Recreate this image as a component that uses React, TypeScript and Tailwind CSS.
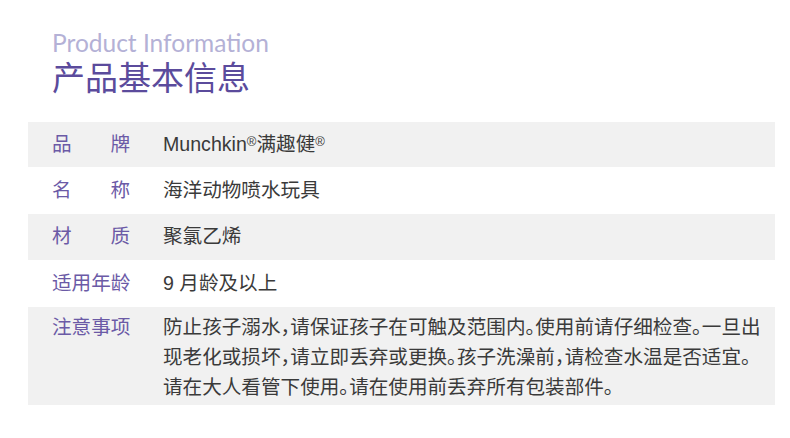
const rows = [
  { label: "品牌", value: "brand", gray: true, h: "h-[45px]" },
  { label: "名称", value: "海洋动物喷水玩具", gray: false, h: "h-[47px]" },
  { label: "材质", value: "聚氯乙烯", gray: true, h: "h-[46px]" },
  { label: "适用年龄", value: "9 月龄及以上", gray: false, h: "h-[47px]" },
];

function Label({ text }: { text: string }) {
  // two-char labels are spread over the width of four chars
  return (
    <div className="w-[78px] flex justify-between text-[#6b5aa6]">
      {text.split("").map((c, i) => (
        <span key={i}>{c}</span>
      ))}
    </div>
  );
}

export default function App() {
  return (
    <div
      className="w-[790px] h-[438px] bg-white pl-[28px] pr-[15px] pt-[28px]"
      style={{ fontFamily: '"Liberation Sans", "Noto Sans CJK SC", sans-serif' }}
    >
      {/* HEADER */}
      <div className="pl-[24px]">
        <div
          className="text-[24.5px] leading-[30px] text-[#b4b1d6]"
          style={{ fontFamily: 'Lato, "Noto Sans", sans-serif' }}
        >
          Product Information
        </div>
        <div
          className="text-[33px] leading-[36px] text-[#5b4b9c]"
          style={{ fontFamily: '"Noto Sans CJK SC", sans-serif' }}
        >
          产品基本信息
        </div>
      </div>

      {/* TABLE */}
      <div className="mt-[28px] text-[19.6px] text-[#3a3a3a]">
        {rows.map((r) => (
          <div
            key={r.label}
            className={`flex items-center ${r.h} ${r.gray ? "bg-[#f1f1f1]" : "bg-white"}`}
          >
            <div className="w-[135px] pl-[24px] shrink-0">
              <Label text={r.label} />
            </div>
            <div className="whitespace-nowrap">
              {r.value === "brand" ? (
                <>
                  Munchkin<sup className="text-[13px] -top-[5px]">®</sup>满趣健
                  <sup className="text-[13px] -top-[5px]">®</sup>
                </>
              ) : (
                r.value
              )}
            </div>
          </div>
        ))}

        <div className="flex bg-[#f1f1f1] h-[98px] pt-[5px] leading-[30px]">
          <div className="w-[135px] pl-[24px] shrink-0">
            <Label text="注意事项" />
          </div>
          {/* punctuation is half-width in the source artwork */}
          <div className="whitespace-nowrap" style={{ fontFeatureSettings: '"halt"' }}>
            防止孩子溺水，请保证孩子在可触及范围内。使用前请仔细检查。一旦出
            <br />
            现老化或损坏，请立即丢弃或更换。孩子洗澡前，请检查水温是否适宜。
            <br />
            请在大人看管下使用。请在使用前丢弃所有包装部件。
          </div>
        </div>
      </div>
    </div>
  );
}
